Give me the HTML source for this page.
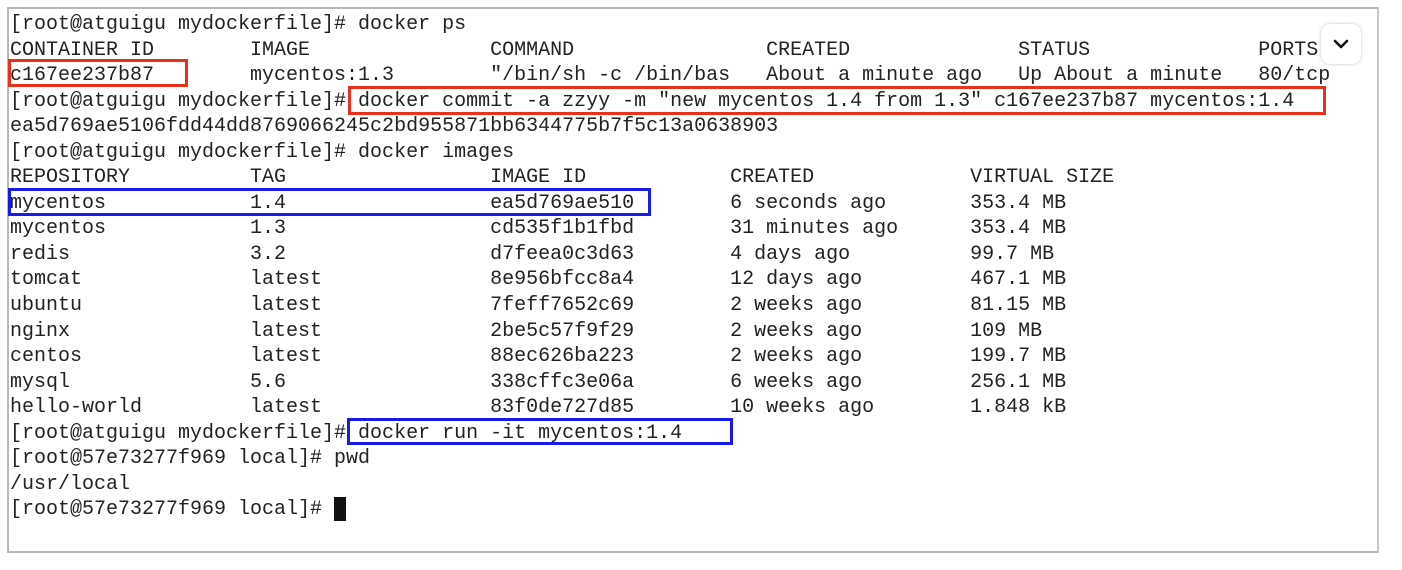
<!DOCTYPE html>
<html><head><meta charset="utf-8"><style>
html,body{margin:0;padding:0;background:#fff;width:1402px;height:570px;overflow:hidden;position:relative}
.frame{position:absolute;left:7px;top:7px;width:1372px;height:546px;border:2px solid #b8b8b8;border-right-color:#c8c8c8;box-sizing:border-box}
pre{position:absolute;left:10px;top:12px;margin:0;font-family:"Liberation Mono","DejaVu Sans Mono",monospace;font-size:20px;line-height:25.55px;color:#222}
.box{position:absolute;border:3px solid;box-sizing:border-box}
.r{border-color:#e8321e}.b{border-color:#1a1ae6}
.btn{position:absolute;left:1321px;top:24px;width:40px;height:40px;border-radius:9px;background:#fff;box-shadow:0 0 3px rgba(0,0,0,.25)}
.cur{position:absolute;left:334px;top:497px;width:12px;height:24px;background:#111}
</style></head><body>
<div class="frame"></div>
<pre>[root@atguigu mydockerfile]# docker ps
CONTAINER ID        IMAGE               COMMAND                CREATED              STATUS              PORTS
c167ee237b87        mycentos:1.3        "/bin/sh -c /bin/bas   About a minute ago   Up About a minute   80/tcp
[root@atguigu mydockerfile]# docker commit -a zzyy -m "new mycentos 1.4 from 1.3" c167ee237b87 mycentos:1.4
ea5d769ae5106fdd44dd8769066245c2bd955871bb6344775b7f5c13a0638903
[root@atguigu mydockerfile]# docker images
REPOSITORY          TAG                 IMAGE ID            CREATED             VIRTUAL SIZE
mycentos            1.4                 ea5d769ae510        6 seconds ago       353.4 MB
mycentos            1.3                 cd535f1b1fbd        31 minutes ago      353.4 MB
redis               3.2                 d7feea0c3d63        4 days ago          99.7 MB
tomcat              latest              8e956bfcc8a4        12 days ago         467.1 MB
ubuntu              latest              7feff7652c69        2 weeks ago         81.15 MB
nginx               latest              2be5c57f9f29        2 weeks ago         109 MB
centos              latest              88ec626ba223        2 weeks ago         199.7 MB
mysql               5.6                 338cffc3e06a        6 weeks ago         256.1 MB
hello-world         latest              83f0de727d85        10 weeks ago        1.848 kB
[root@atguigu mydockerfile]# docker run -it mycentos:1.4
[root@57e73277f969 local]# pwd
/usr/local
[root@57e73277f969 local]# </pre>
<div class="cur"></div>
<div class="box r" style="left:8px;top:59px;width:180px;height:28px"></div>
<div class="box r" style="left:348px;top:86px;width:978px;height:29px"></div>
<div class="box b" style="left:8px;top:188px;width:643px;height:28px"></div>
<div class="box b" style="left:347px;top:418px;width:386px;height:27px"></div>
<div class="btn"><svg width="40" height="40" viewBox="0 0 40 40"><path d="M14 17 L20 23 L26 17" fill="none" stroke="#111" stroke-width="2.6" stroke-linecap="round" stroke-linejoin="round"/></svg></div>
</body></html>
